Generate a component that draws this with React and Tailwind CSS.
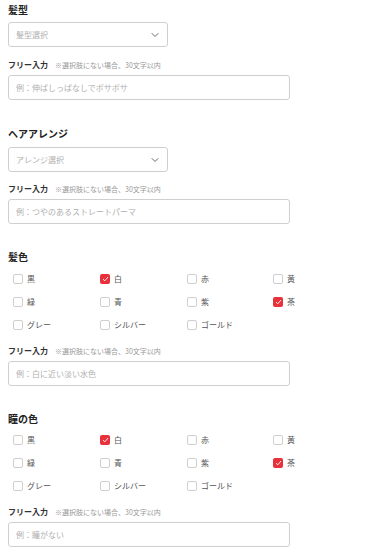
import { ChevronDown } from "lucide-react";

const FONT = { fontFamily: '"Noto Sans CJK JP", "Noto Sans", sans-serif' };

const COLORS = [
  ["黒", false],
  ["白", true],
  ["赤", false],
  ["黄", false],
  ["緑", false],
  ["青", false],
  ["紫", false],
  ["茶", true],
  ["グレー", false],
  ["シルバー", false],
  ["ゴールド", false],
];

const Title = ({ children, className = "" }) => (
  <div className={`text-[10px] leading-[14px] font-bold text-[#222] ${className}`}>{children}</div>
);

const Select = ({ placeholder, className = "" }) => (
  <div
    className={`w-[160px] h-[25px] border border-[#cfcfcf] rounded-[3px] flex items-center justify-between pl-[7px] pr-[6px] ${className}`}
  >
    <span className="text-[8px] text-[#b0b0b0]">{placeholder}</span>
    <ChevronDown size={12} strokeWidth={1.6} className="text-[#444]" />
  </div>
);

const FreeInput = ({ placeholder, className = "" }) => (
  <>
    <div className={`flex items-center h-[12px] ${className}`}>
      <span className="text-[8px] font-bold text-[#333]">フリー入力</span>
      <span className="text-[7px] text-[#999] ml-[7px]">※選択肢にない場合、30文字以内</span>
    </div>
    <div className="mt-[4px] w-[282px] h-[25px] border border-[#cfcfcf] rounded-[3px] flex items-center pl-[7px]">
      <span className="text-[8px] text-[#b0b0b0]">{placeholder}</span>
    </div>
  </>
);

const Checkbox = ({ label, checked }) => (
  <div className="flex items-center h-[23px]">
    {checked ? (
      <span className="w-[10px] h-[10px] rounded-[2px] bg-[#e8313a] flex items-center justify-center">
        <svg width="7" height="6" viewBox="0 0 7 6" fill="none">
          <path d="M1 3.2 L2.8 4.8 L6 1" stroke="white" strokeWidth="0.9" />
        </svg>
      </span>
    ) : (
      <span className="w-[10px] h-[10px] rounded-[2px] border border-[#cfcfcf] bg-white" />
    )}
    <span className="ml-[4px] text-[8px] text-[#555]">{label}</span>
  </div>
);

const ColorGrid = ({ className = "" }) => (
  <div className={`grid grid-cols-[87px_87px_86px_60px] pl-[5px] ${className}`}>
    {COLORS.map(([label, checked]) => (
      <Checkbox key={label} label={label} checked={checked} />
    ))}
  </div>
);

export default function App() {
  return (
    <div className="w-[380px] h-[558px] bg-white px-[8px] pt-[3px] overflow-hidden" style={FONT}>
      <Title>髪型</Title>
      <Select placeholder="髪型選択" className="mt-[5px]" />
      <FreeInput placeholder="例：伸ばしっぱなしでボサボサ" className="mt-[12px]" />

      <Title className="mt-[27px]">ヘアアレンジ</Title>
      <Select placeholder="アレンジ選択" className="mt-[6px]" />
      <FreeInput placeholder="例：つやのあるストレートパーマ" className="mt-[11px]" />

      <Title className="mt-[26px]">髪色</Title>
      <ColorGrid className="mt-[3px]" />
      <FreeInput placeholder="例：白に近い淡い水色" className="mt-[9px]" />

      <Title className="mt-[26px]">瞳の色</Title>
      <ColorGrid className="mt-[2px]" />
      <FreeInput placeholder="例：瞳がない" className="mt-[9px]" />
    </div>
  );
}
